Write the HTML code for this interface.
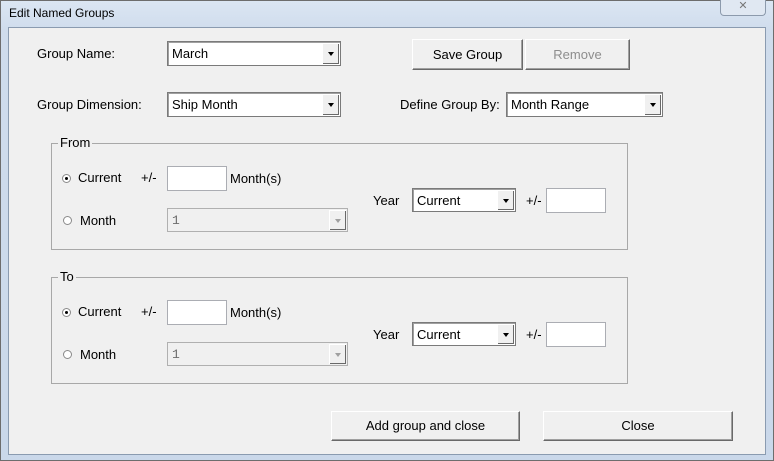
<!DOCTYPE html><html><head><style>
body{margin:0;width:774px;height:461px;background:#cfdbea;font-family:"Liberation Sans",sans-serif;font-size:13px;color:#000;position:relative;overflow:hidden}
.a{position:absolute}
.win{left:0;top:0;width:772px;height:459px;border:1px solid #6d6d6d;background:linear-gradient(#dbe6f3,#cfdcec 30px,#cad8ea)}
.client{left:8px;top:27px;width:756px;height:426px;background:#f0f0f0;border:1px solid #8a9bb0}
.lbl{white-space:nowrap;line-height:14px}
.combo{background:#fff;border:1px solid #7a7a7a;box-shadow:inset 1px 1px 0 #a0a0a0;box-sizing:border-box}
.combo span{position:absolute;left:4px;top:4px}
.combo i{position:absolute;right:1px;top:1px;bottom:1px;width:16px;background:#f0f0f0;border-left:1px solid #fff;border-top:1px solid #fff;box-shadow:inset -1px -1px 0 #696969}
.combo i:after{content:"";position:absolute;left:5px;top:8px;border:3.5px solid transparent;border-top:4px solid #000;border-bottom:0}
.dis{background:#f0f0f0;border-color:#b0b0b0;box-shadow:none}
.dis span{color:#6d6d6d;font-family:"Liberation Mono",monospace}
.dis i:after{border-top-color:#a0a0a0}
.tb{background:#fff;border:1px solid #abadb3;box-sizing:border-box}
.btn{background:#f0f0f0;border:1px solid;border-color:#fff #696969 #696969 #fff;box-shadow:inset -1px -1px 0 #a0a0a0,0 0 0 0 #000;box-sizing:border-box;text-align:center}
.grp{border:1px solid #a8a8a8;box-sizing:border-box}
.leg{background:#f0f0f0;padding:0 2px}
.rad{width:9px;height:9px;border-radius:50%;border:1px solid #8a8a8a;background:#fff;box-sizing:border-box}
.rad.on:after{content:"";position:absolute;left:2px;top:2px;width:3px;height:3px;border-radius:50%;background:#000}
</style></head><body>
<div class="a win"></div>
<div class="a lbl" style="left:9px;top:6px;font-size:12px">Edit Named Groups</div>
<div class="a" style="left:720px;top:0;width:44px;height:15px;border:1px solid #8c9aac;border-top:none;border-radius:0 0 4px 4px;background:#e0e8f2;font-size:11px;color:#777;text-align:center;line-height:13px">✕</div>
<div class="a client"></div>

<div class="a lbl" style="left:37px;top:47px">Group Name:</div>
<div class="a combo" style="left:167px;top:41px;width:174px;height:25px"><span>March</span><i></i></div>
<div class="a btn" style="left:412px;top:39px;width:111px;height:31px;line-height:29px">Save Group</div>
<div class="a btn" style="left:525px;top:39px;width:105px;height:31px;line-height:29px;color:#8d8d8d">Remove</div>

<div class="a lbl" style="left:37px;top:98px">Group Dimension:</div>
<div class="a combo" style="left:167px;top:92px;width:174px;height:25px"><span>Ship Month</span><i></i></div>
<div class="a lbl" style="left:400px;top:98px">Define Group By:</div>
<div class="a combo" style="left:506px;top:92px;width:157px;height:25px"><span>Month Range</span><i></i></div>

<!-- From -->
<div class="a grp" style="left:51px;top:143px;width:577px;height:107px"></div>
<div class="a lbl leg" style="left:58px;top:136px">From</div>
<div class="a rad on" style="left:62px;top:174px"></div>
<div class="a lbl" style="left:78px;top:171px">Current</div>
<div class="a lbl" style="left:141px;top:171px">+/-</div>
<div class="a tb" style="left:167px;top:166px;width:60px;height:25px"></div>
<div class="a lbl" style="left:230px;top:172px">Month(s)</div>
<div class="a rad" style="left:63px;top:216px"></div>
<div class="a lbl" style="left:80px;top:214px">Month</div>
<div class="a combo dis" style="left:167px;top:208px;width:181px;height:24px"><span>1</span><i></i></div>
<div class="a lbl" style="left:373px;top:194px">Year</div>
<div class="a combo" style="left:412px;top:188px;width:104px;height:24px"><span>Current</span><i></i></div>
<div class="a lbl" style="left:526px;top:194px">+/-</div>
<div class="a tb" style="left:546px;top:188px;width:60px;height:25px"></div>

<!-- To -->
<div class="a grp" style="left:51px;top:277px;width:577px;height:107px"></div>
<div class="a lbl leg" style="left:58px;top:270px">To</div>
<div class="a rad on" style="left:62px;top:308px"></div>
<div class="a lbl" style="left:78px;top:305px">Current</div>
<div class="a lbl" style="left:141px;top:305px">+/-</div>
<div class="a tb" style="left:167px;top:300px;width:60px;height:25px"></div>
<div class="a lbl" style="left:230px;top:306px">Month(s)</div>
<div class="a rad" style="left:63px;top:350px"></div>
<div class="a lbl" style="left:80px;top:348px">Month</div>
<div class="a combo dis" style="left:167px;top:342px;width:181px;height:24px"><span>1</span><i></i></div>
<div class="a lbl" style="left:373px;top:328px">Year</div>
<div class="a combo" style="left:412px;top:322px;width:104px;height:24px"><span>Current</span><i></i></div>
<div class="a lbl" style="left:526px;top:328px">+/-</div>
<div class="a tb" style="left:546px;top:322px;width:60px;height:25px"></div>

<div class="a btn" style="left:331px;top:411px;width:189px;height:30px;line-height:28px">Add group and close</div>
<div class="a btn" style="left:543px;top:411px;width:190px;height:30px;line-height:28px">Close</div>
</body></html>
